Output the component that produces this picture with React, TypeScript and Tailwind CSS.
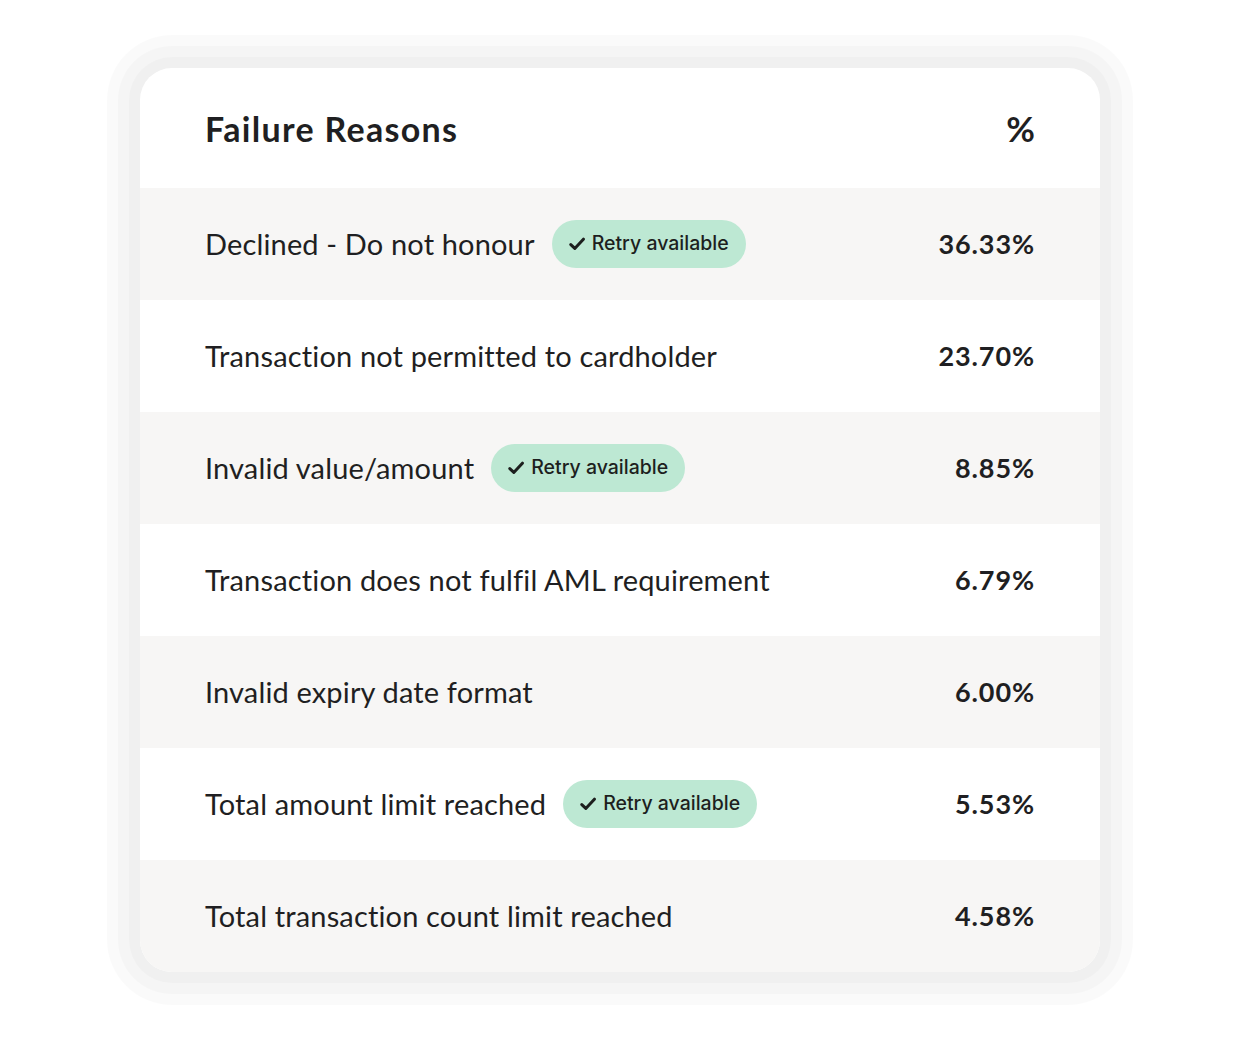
const rows = [
  { reason: "Declined - Do not honour", pct: "36.33%", retry: true },
  { reason: "Transaction not permitted to cardholder", pct: "23.70%", retry: false },
  { reason: "Invalid value/amount", pct: "8.85%", retry: true },
  { reason: "Transaction does not fulfil AML requirement", pct: "6.79%", retry: false },
  { reason: "Invalid expiry date format", pct: "6.00%", retry: false },
  { reason: "Total amount limit reached", pct: "5.53%", retry: true },
  { reason: "Total transaction count limit reached", pct: "4.58%", retry: false },
];

export default function App() {
  return (
    <div className="flex min-h-[1040px] justify-center bg-white pt-[68px] font-['Lato',sans-serif] text-[#1f1f22]">
      <div className="w-[960px] self-start overflow-hidden rounded-[32px] bg-white shadow-[0_0_0_11px_rgba(0,0,0,0.02),0_0_0_22px_rgba(0,0,0,0.02),0_0_0_33px_rgba(0,0,0,0.02)]">
        <div className="flex h-[120px] items-center justify-between px-[65px]">
          <span className="text-[34px] font-bold tracking-[1.3px]">Failure Reasons</span>
          <span className="text-[35px] font-bold">%</span>
        </div>
        {rows.map((r, i) => (
          <div
            key={r.reason}
            className={`flex h-[112px] items-center justify-between px-[65px] ${i % 2 === 0 ? "bg-[#f7f6f5]" : "bg-white"}`}
          >
            <div className="flex items-center gap-[17px]">
              <span className="text-[29px] tracking-[0.15px]">{r.reason}</span>
              {r.retry ? <RetryBadge /> : null}
            </div>
            <span className="text-[27px] font-bold tracking-[0.9px]">{r.pct}</span>
          </div>
        ))}
      </div>
    </div>
  );
}

function RetryBadge() {
  return (
    <span className="flex h-12 items-center gap-[7px] rounded-full bg-[#bde8d3] pl-[17px] pr-[17px] font-['Inter',sans-serif] text-[19.5px] font-medium text-[#1d1f1e]">
      <svg width="16" height="14" viewBox="0 0 16 14" fill="none">
        <path d="M1.8 7.6 L5.8 11.4 L14.4 2.2" stroke="#1d1f1e" strokeWidth="3" strokeLinecap="round" strokeLinejoin="round" />
      </svg>
      Retry available
    </span>
  );
}
